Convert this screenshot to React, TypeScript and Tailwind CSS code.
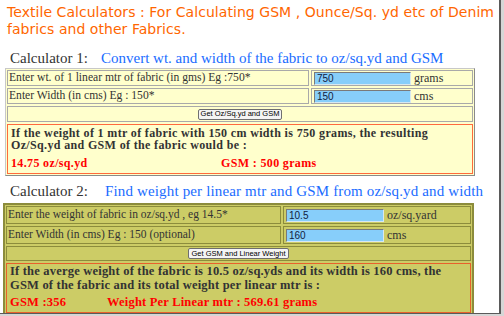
import React from "react";

const serif = "font-['Liberation_Serif',Georgia,serif]";

function Field({ value, unit, w }: { value: string; unit: string; w: string }) {
  return (
    <div className="flex items-center gap-[3px] pl-[2px]">
      <div
        className={`${w} h-[13px] bg-[#87cefa] border border-t-[#7a7a7a] border-l-[#7a7a7a] border-b-[#d8e8f0] border-r-[#d8e8f0] pl-[2px] text-[10px] leading-[11px] text-[#102040] font-['Liberation_Sans',Arial,sans-serif]`}
      >
        {value}
      </div>
      <span className={`${serif} text-[12px] text-[#333]`}>{unit}</span>
    </div>
  );
}

function Btn({ label }: { label: string }) {
  return (
    <div className="px-[2px] h-[11px] flex items-center rounded-[2px] border border-[#6f6f6f] bg-[#f4f4f4] text-[7.5px] leading-none text-black font-['Liberation_Sans',Arial,sans-serif]">
      {label}
    </div>
  );
}

export default function App() {
  return (
    <div className="w-[504px] h-[316px] bg-[#d6d6d6] overflow-hidden">
      <div className="w-[501px] h-[314px] bg-white border-r-2 border-b border-[#5a5a5a] overflow-hidden">
        {/* Title */}
        <h1 className="pt-[4px] pl-[7px] text-[14px] leading-[17px] text-[#ff6600] font-['DejaVu_Sans',Verdana,sans-serif] font-normal tracking-[0.05px] whitespace-nowrap">
          Textile Calculators : For Calculating GSM , Ounce/Sq. yd etc of Denim
          <br />
          fabrics and other Fabrics.
        </h1>

        {/* Calculator 1 */}
        <div className={`${serif} mt-[10px] pl-[10px] flex items-baseline text-[15px] leading-[20px]`}>
          <span className="w-[91px] text-[#333]">Calculator 1:</span>
          <span className="text-[#1a6cff]">Convert wt. and width of the fabric to oz/sq.yd and GSM</span>
        </div>

        <div className="ml-[5px] w-[470px] bg-[#ffffcc] border border-t-[#c8c8c8] border-l-[#c8c8c8] border-b-[#8a8a8a] border-r-[#8a8a8a] p-[1px] flex flex-col gap-[2px]">
          <div className="flex gap-[2px] h-[16px]">
            <div className={`${serif} flex-1 flex items-center pl-[1px] border border-[#a9a9a9] text-[11.6px] text-[#333]`}>
              Enter wt. of 1 linear mtr of fabric (in gms) Eg :750*
            </div>
            <div className="w-[162px] flex items-center border border-[#a9a9a9]">
              <Field value="750" unit="grams" w="w-[97px]" />
            </div>
          </div>
          <div className="flex gap-[2px] h-[16px]">
            <div className={`${serif} flex-1 flex items-center pl-[1px] border border-[#a9a9a9] text-[11.6px] text-[#333]`}>
              Enter Width (in cms) Eg : 150*
            </div>
            <div className="w-[162px] flex items-center border border-[#a9a9a9]">
              <Field value="150" unit="cms" w="w-[97px]" />
            </div>
          </div>
          <div className="h-[16px] flex items-center justify-center border border-[#a9a9a9]">
            <Btn label="Get Oz/Sq.yd and GSM" />
          </div>
          <div className={`${serif} h-[50px] border border-[#ff6a3d] px-[3px] pt-[3px] text-[12px] leading-[11.5px] tracking-[0.35px] font-bold text-[#333] whitespace-nowrap`}>
            <p>If the weight of 1 mtr of fabric with 150 cm width is 750 grams, the resulting</p>
            <p>Oz/Sq.yd and GSM of the fabric would be :</p>
            <div className="flex mt-[7px] text-[#ff0000]">
              <span className="w-[210px]">14.75 oz/sq.yd</span>
              <span>GSM : 500 grams</span>
            </div>
          </div>
        </div>

        {/* Calculator 2 */}
        <div className={`${serif} mt-[5px] pl-[10px] flex items-baseline text-[15px] leading-[20px]`}>
          <span className="w-[95px] text-[#333]">Calculator 2:</span>
          <span className="text-[#1a6cff] tracking-[0.15px]">Find weight per linear mtr and GSM from oz/sq.yd and width</span>
        </div>

        <div className="mt-[2px] ml-[3px] w-[471px] bg-[#cccc66] border-2 border-[#8c8c3c] p-[1px] flex flex-col gap-[2px]">
          <div className="flex gap-[2px] h-[18px]">
            <div className={`${serif} flex-1 flex items-center pl-[1px] border border-[#8c8c3c] text-[11.5px] text-[#333]`}>
              Enter the weight of fabric in oz/sq.yd , eg 14.5*
            </div>
            <div className="w-[188px] flex items-center border border-[#8c8c3c]">
              <Field value="10.5" unit="oz/sq.yard" w="w-[98px]" />
            </div>
          </div>
          <div className="flex gap-[2px] h-[18px]">
            <div className={`${serif} flex-1 flex items-center pl-[1px] border border-[#8c8c3c] text-[11.5px] text-[#333]`}>
              Enter Width (in cms) Eg : 150 (optional)
            </div>
            <div className="w-[188px] flex items-center border border-[#8c8c3c]">
              <Field value="160" unit="cms" w="w-[98px]" />
            </div>
          </div>
          <div className="h-[15px] flex items-center justify-center border border-[#8c8c3c]">
            <Btn label="Get GSM and Linear Weight" />
          </div>
          <div className={`${serif} h-[50px] border border-[#e8602c] px-[3px] text-[12.5px] leading-[14px] tracking-[0.2px] font-bold text-[#333] whitespace-nowrap`}>
            <p>If the averge weight of the fabric is 10.5 oz/sq.yds and its width is 160 cms, the</p>
            <p>GSM of the fabric and its total weight per linear mtr is :</p>
            <div className="flex mt-[3px] text-[#ff0000]">
              <span className="w-[97px]">GSM :356</span>
              <span>Weight Per Linear mtr : 569.61 grams</span>
            </div>
          </div>
        </div>
      </div>
    </div>
  );
}
